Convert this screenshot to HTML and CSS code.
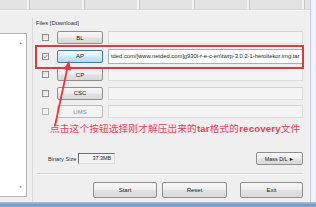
FILE: index.html
```html
<!DOCTYPE html>
<html>
<head>
<meta charset="utf-8">
<link rel="stylesheet" href="styles.css">
</head>
<body>
<div class="win">
  <div class="body">
    <div class="content">
      <div class="tabs">
        <span class="tab first"></span><span class="tab"></span><span class="tab"></span><span class="tab"></span><span class="tab"></span><span class="tab"></span>
      </div>
      <div class="main">
        <div class="list">
          <span class="arr">&#9650;</span>
          <span class="arr">&#9660;</span>
        </div>
        <div class="panel">
          <div class="legend">Files [Download]</div>
          <div class="rows">
            <div class="row">
              <span class="chk"></span>
              <span class="btn">BL</span>
              <span class="field"></span>
            </div>
            <div class="row">
              <span class="chk on"><svg viewBox="0 0 7 7" width="5" height="5"><path d="M1 3.6 L2.8 5.4 L6 1.4" fill="none" stroke="#4a6a8a" stroke-width="1.1"/></svg></span>
              <span class="btn hot">AP</span>
              <span class="field live">tded.com/[www.netded.com]g930l-r-e-c-en\twrp-3.0.2-1-heroltekor.img.tar</span>
            </div>
            <div class="row">
              <span class="chk"></span>
              <span class="btn">CP</span>
              <span class="field"></span>
            </div>
            <div class="row">
              <span class="chk"></span>
              <span class="btn">CSC</span>
              <span class="field"></span>
            </div>
            <div class="row">
              <span class="chk dis"></span>
              <span class="btn off">UMS</span>
              <span class="field"></span>
            </div>
          </div>
          <div class="size-row">
            <span class="size-label">Binary Size</span>
            <span class="size-box">37.3MB</span>
            <span class="spacer"></span>
            <span class="btn mass">Mass D/L &#9658;</span>
          </div>
          <div class="sep"></div>
          <div class="actions">
            <span class="btn big start">Start</span>
            <span class="btn big reset">Reset</span>
            <span class="btn big exit">Exit</span>
          </div>
        </div>
      </div>
    </div>
    <div class="frame-r"></div>
  </div>
  <div class="frame-b"></div>

  <div class="mark"></div>
  <svg class="arrow" width="316" height="207" viewBox="0 0 316 207">
    <line x1="67.4" y1="68" x2="55" y2="126" stroke="#e8373f" stroke-width="1.8"/>
    <polygon points="69.2,60.5 71,70.6 63.6,69.2" fill="#e8373f"/>
  </svg>
  <div class="note">点击这个按钮选择刚才解压出来的<b>tar</b>格式的<b>recovery</b>文件</div>
</div>
</body>
</html>
```

FILE: styles.css
```css
* { box-sizing: border-box; }
html, body { margin: 0; padding: 0; }
body { background: #efefef; }

.win {
  position: relative;
  width: 316px;
  height: 207px;
  overflow: hidden;
  background: #efefef;
  font-family: "Liberation Sans", "DejaVu Sans", sans-serif;
  font-size: 6px;
  color: #222;
}

.body { display: flex; height: 202px; }
.content { width: 310px; display: flex; flex-direction: column; }
.frame-r {
  width: 6px;
  background: linear-gradient(90deg, #e9eef4, #f7f9fc 60%, #dfe7f0);
  border-left: 1px solid #c9d2dc;
}
.frame-b {
  height: 5px;
  background: linear-gradient(180deg, #a9c3de, #6f98c6 60%, #8aaed3);
}

.tabs {
  display: flex;
  height: 10px;
  background: #e3e3e3;
  border-bottom: 1px solid #d6d6d6;
  box-shadow: 0 1px 0 #f8f8f8;
}
.tab {
  flex: none;
  width: 55px;
  height: 9px;
  border-right: 1px solid #c6c6c6;
  box-shadow: inset -2px 0 0 #f3f3f3;
}
.tab.first { width: 30px; }

.main { flex: 1; display: flex; }

.list {
  width: 27px;
  height: 164px;
  margin-top: 23px;
  background: #fff;
  border: 1px solid #b4b4b4;
  border-left: none;
  display: flex;
  flex-direction: column;
  justify-content: space-between;
  align-items: flex-end;
  padding: 7px 4px 7px 0;
}
.arr { font-size: 3px; line-height: 4px; color: #6a6a6a; }

.panel {
  flex: 1;
  margin-left: 5px;
  margin-top: 8px;
  border-left: 1px solid #d8d8d8;
  padding-right: 7px;
  display: flex;
  flex-direction: column;
}

.legend {
  height: 8px;
  margin-top: 1px;
  padding-left: 3px;
  line-height: 8px;
  font-size: 5.8px;
  color: #333;
}

.rows {
  margin-top: 4px;
  display: flex;
  flex-direction: column;
  gap: 5.5px;
}
.row {
  display: flex;
  align-items: center;
  height: 13px;
  padding-left: 9px;
}

.chk {
  flex: none;
  width: 7px;
  height: 7px;
  border: 1px solid #8e8f8f;
  background: linear-gradient(135deg, #dcdcdc, #fbfbfb);
  margin-right: 8px;
  display: flex;
  align-items: center;
  justify-content: center;
}
.chk.on { background: linear-gradient(135deg, #e4e4e4, #fbfbfb); }
.chk.dis { border-color: #b5b5b5; background: #f4f4f4; }

.btn {
  flex: none;
  display: flex;
  align-items: center;
  justify-content: center;
  border: 1px solid #8f8f8f;
  border-radius: 2px;
  background: linear-gradient(180deg, #f7f7f7 0%, #eeeeee 48%, #e2e2e2 52%, #d8d8d8 100%);
  color: #222;
  font-size: 6px;
  white-space: nowrap;
}
.row .btn { width: 46px; height: 13px; margin-right: 5px; }
.btn.hot {
  border-color: #3d7bad;
  background: linear-gradient(180deg, #eef8fe 0%, #dff1fc 48%, #c6e8fb 52%, #b0ddf6 100%);
}
.btn.off {
  border-color: #b9bdbf;
  background: #f3f3f3;
  color: #8a8a8a;
}

.field {
  flex: 1;
  height: 13px;
  border: 1px solid #dcdcdc;
  border-top-color: #d2d2d2;
  background: #f4f4f4;
  font-size: 5.8px;
  line-height: 11px;
  padding-left: 2px;
  white-space: nowrap;
  overflow: hidden;
}
.field.live {
  background: #fff;
  border-color: #abadb3;
  height: 15px;
  line-height: 13px;
  color: #222;
}

.size-row {
  display: flex;
  align-items: center;
  height: 13px;
  margin-top: 34px;
}
.size-label {
  width: 45px;
  padding-left: 15px;
  font-size: 5.6px;
  color: #333;
  white-space: nowrap;
}
.size-box {
  width: 37px;
  height: 11px;
  background: #f2f2f2;
  border: 1px solid #dcdcdc;
  border-top-color: #707070;
  border-left-color: #707070;
  text-align: right;
  padding-right: 3px;
  line-height: 9px;
  font-size: 5.4px;
}
.spacer { flex: 1; }
.btn.mass { width: 47px; height: 13px; font-size: 5.4px; }

.sep {
  height: 2px;
  margin-top: 8px;
  margin-left: 4px;
  border-top: 1px solid #d2d2d2;
  border-bottom: 1px solid #fafafa;
}

.actions {
  display: flex;
  margin-top: 7px;
  padding-left: 60px;
}
.btn.big { height: 16px; font-size: 6px; }
.start { width: 64px; margin-right: 5px; }
.reset { width: 65px; margin-right: 13px; }
.exit { width: 63px; }

.mark {
  position: absolute;
  left: 35px;
  top: 45px;
  width: 269px;
  height: 24px;
  border: 2px solid #d83a46;
}
.arrow { position: absolute; left: 0; top: 0; }
.note {
  position: absolute;
  left: 50px;
  top: 122px;
  font-family: "Noto Sans CJK SC", "Liberation Sans", sans-serif;
  font-size: 9.6px;
  letter-spacing: 0.2px;
  line-height: 12px;
  color: #e8425a;
  white-space: nowrap;
}
.note b { font-family: "Liberation Sans", "Noto Sans CJK SC", sans-serif; font-weight: bold; }
```
